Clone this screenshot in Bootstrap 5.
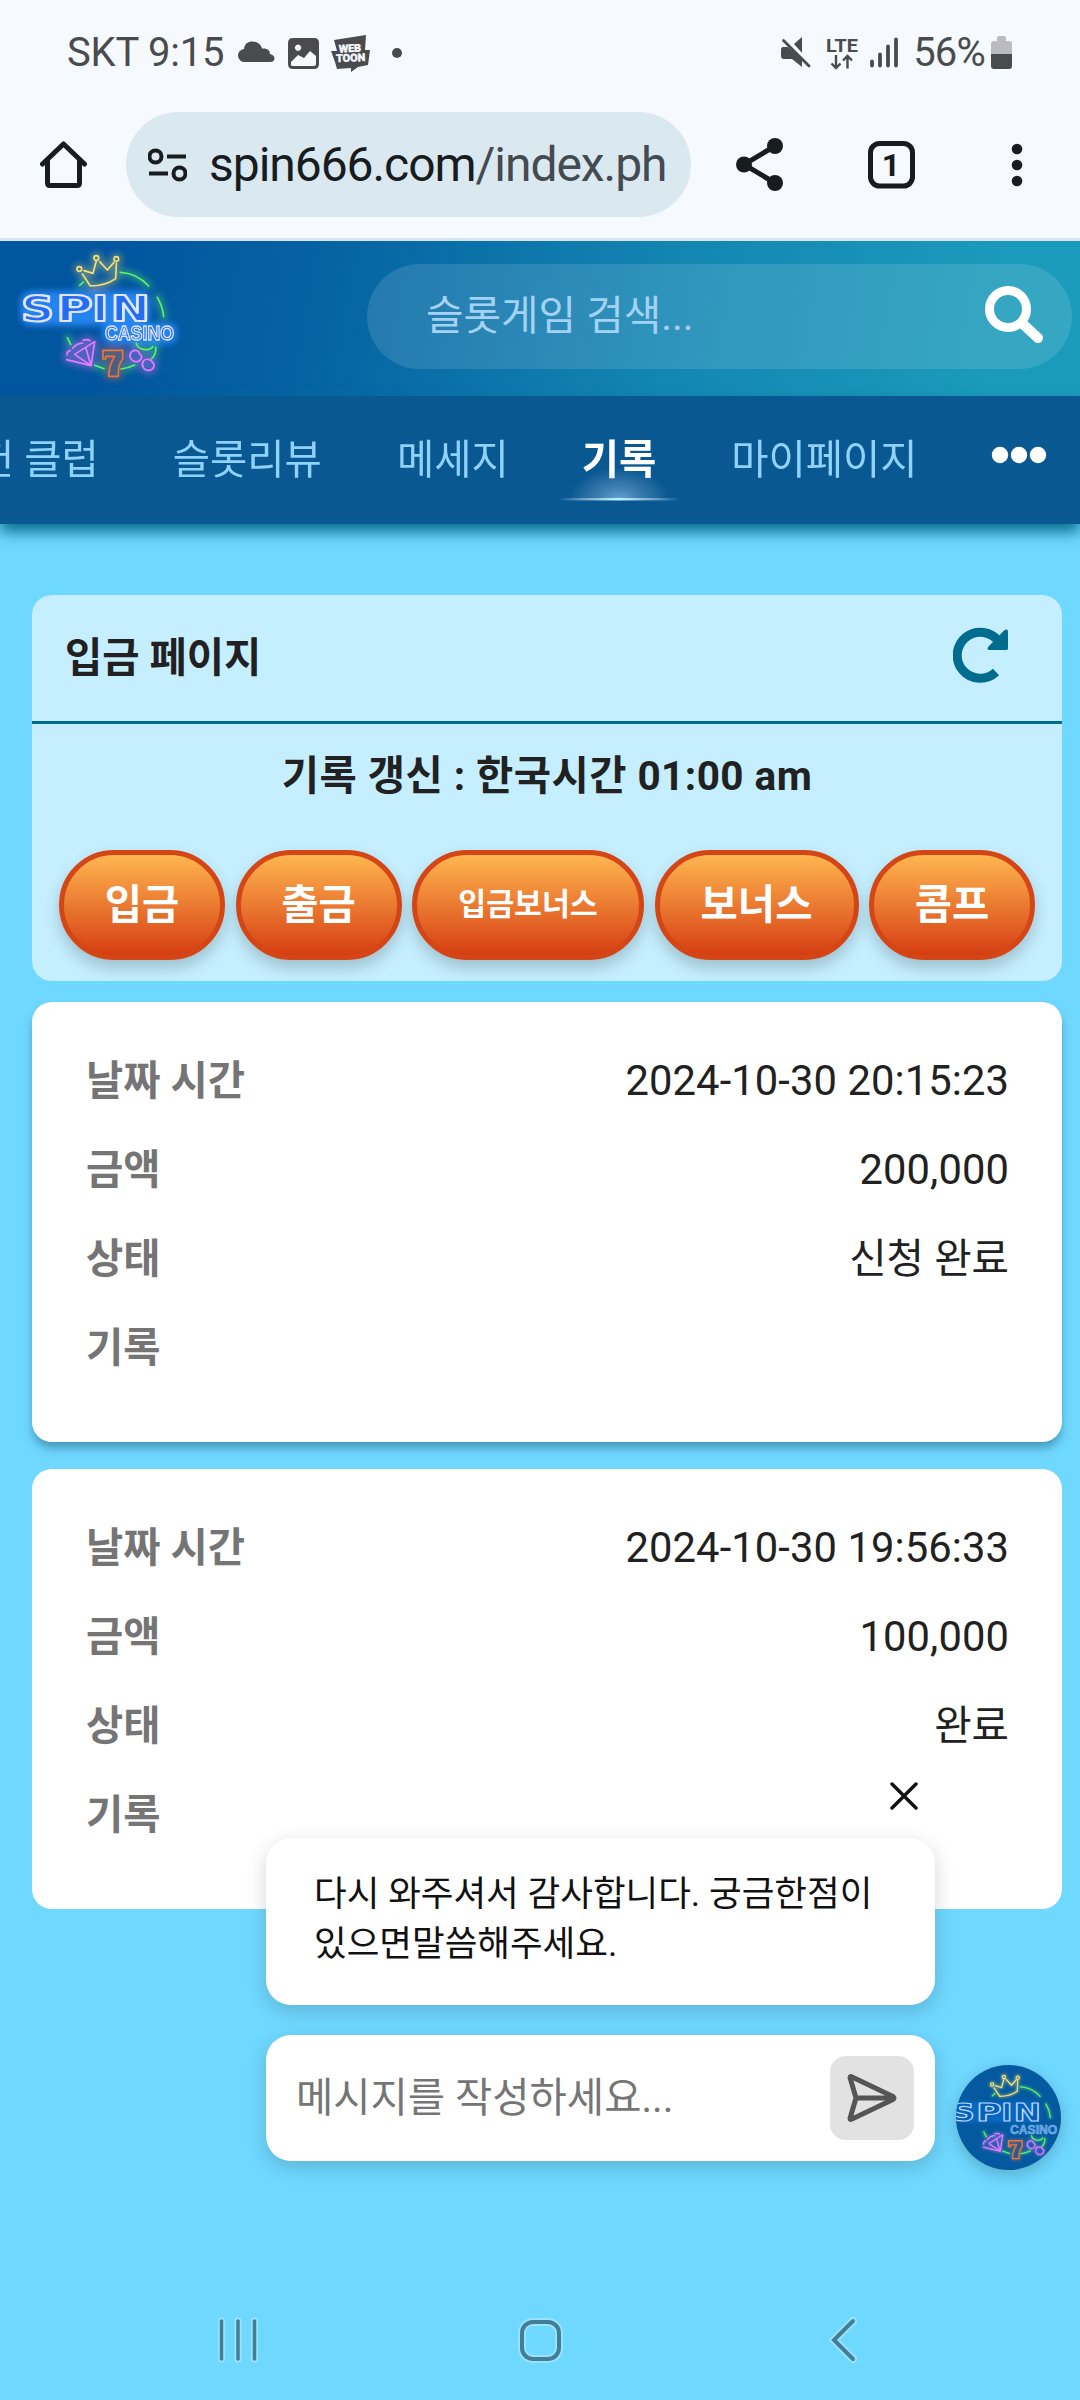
<!DOCTYPE html>
<html lang="ko">
<head>
<meta charset="utf-8">
<meta name="viewport" content="width=device-width, initial-scale=1">
<title>입금 페이지</title>
<link href="https://cdn.jsdelivr.net/npm/bootstrap@5.3.0/dist/css/bootstrap.min.css" rel="stylesheet">
<style>
body{width:1080px;height:2400px;overflow:hidden;background:#6fd8ff;color:#212121;font-family:Roboto,"Noto Sans CJK KR",sans-serif;font-size:40.5px;line-height:1.2}
svg{display:block;flex:none}
.screen{width:1080px;height:2400px}
.statusbar{height:106px;background:#f6f9fe;color:#4a4b4d;padding:0 67px;font-size:40px}
.browserbar{height:135px;background:#f6f9fe;padding:6px 0 21px 40px;border-bottom:3px solid #d8e5ee;color:#171c1f}
.urlpill{width:565px;height:105px;margin-left:39px;padding-left:22px;background:#dae8f0;font-size:48px;letter-spacing:-1.05px;white-space:nowrap}
.urlpill .path{color:#434b50}
.site-head{height:155px;background:linear-gradient(100deg,#02559f 10%,#0665a3 32%,#1386b3 62%,#1b9bbb 92%);padding:0 8px 0 17px}
.searchbox{width:705px;height:105px;background:rgba(255,255,255,.12);padding:0 29px 0 59px;color:#a3d2f5;margin-bottom:4px;font-size:40.8px}
.tabs{height:128px;background:#0a5892;box-shadow:0 8px 14px #0a6d8e;color:#8fd3fd;white-space:nowrap;z-index:1}
.tabs a{color:inherit;text-decoration:none;height:128px;display:flex;align-items:center}
.tabs a.current{color:#fff;font-weight:700;position:relative}
.glow{position:absolute;left:-24px;top:72px}
.main-col{padding:71px 18px 0 32px}
.panel{height:386px;border-radius:20px;background:#c5efff;overflow:hidden}
.panel-title{height:129px;border-bottom:3px solid #006d8f;padding:0 53px 0 33px;font-weight:700}
.panel-note{height:104px;font-weight:700;letter-spacing:.45px}
.pills{padding:22px 27px 0 27px}
.pill-btn{height:110px;border:5px solid #d44615;border-radius:55px;background:linear-gradient(#ffb650,#d63e12);color:#fff;font-weight:700;font-size:40.5px;padding:0;box-shadow:0 8px 16px rgba(0,0,0,.2)}
.w-a{width:166px}.w-b{width:232px;font-size:30.3px}.w-c{width:204px}
.record{height:440px;border-radius:20px;background:#fff;padding:35px 53px 0 54px;box-shadow:0 7px 10px -1px rgba(30,90,120,.5)}
.record dl div{height:89px}
.record dt{color:#757575;font-weight:700}
.record dd{margin:0;font-size:41.7px;letter-spacing:.1px}
.record dd.ko{font-size:40.7px;letter-spacing:0}
.chat{position:absolute;left:266px;top:1782px;width:795px}
.bubble{width:669px;height:167px;border-radius:25px;background:#fff;color:#111;font-size:35.5px;line-height:50px;padding:31px 40px 0 48px;box-shadow:0 6px 20px rgba(0,0,0,.17);white-space:nowrap}
.composer{width:669px;height:126px;border-radius:25px;background:#fff;color:#757575;padding:0 21px 0 30px;box-shadow:0 6px 20px rgba(0,0,0,.17)}
.send{width:84px;height:84px;border-radius:16px;background:#e2e2e2}
.avatar{width:105px;height:105px;border-radius:50%;overflow:hidden;background:#055a9f;box-shadow:0 5px 16px rgba(0,0,0,.2)}
.sysnav{height:120px;padding:0 223px 0 215px}
</style>
<script src="https://cdn.jsdelivr.net/npm/bootstrap@5.3.0/dist/js/bootstrap.bundle.min.js"></script>
</head>
<body>
<svg width="0" height="0" class="position-absolute">
<defs>
<filter id="halo" x="-30%" y="-40%" width="160%" height="180%"><feGaussianBlur stdDeviation="9"/></filter>
<filter id="soft" x="-30%" y="-30%" width="160%" height="160%"><feGaussianBlur stdDeviation="4"/></filter>
<g id="fruit" fill="none" stroke-linecap="round" stroke-linejoin="round">
<path stroke="#f5df74" d="M247 117L271 153Q316 153 347 131L349 85M252 107L279 115L289 78M299 80L322 105L342 82"/>
<g stroke="#f5df74"><circle cx="238" cy="102" r="7"/><circle cx="289" cy="69" r="7"/><circle cx="349" cy="72" r="7"/></g>
<path stroke="#5ef06b" d="M239 151L250 141M361 112Q410 114 446 153M472 187Q488 214 491 245M202 308L212 328M284 391L312 401M363 402Q386 399 404 390M467 337Q469 357 455 371M409 325Q413 342 436 344Q452 344 458 335"/>
<path stroke="#e97bff" d="M200 374L273 392L284 320L224 358L273 392L257 337M201 360Q201 348 211 347M218 340Q230 325 248 324M250 316Q262 311 270 317"/>
<path stroke="#e97bff" d="M393 352C402 343 417 345 418 356C434 365 420 382 406 380C392 378 386 362 393 352ZM430 378C438 369 455 373 456 381C467 387 462 405 447 406C432 408 422 392 430 378Z"/>
<path stroke="#f0733a" d="M309 346H368V372Q353 390 355 424H326Q326 392 344 364H317V372H309Z"/>
</g>
</defs>
</svg>

<div class="screen d-flex flex-column position-relative">
<header class="statusbar d-flex align-items-center">
<span style="letter-spacing:-.2px">SKT 9:15</span>
<svg style="margin-left:12px" width="170" height="44" viewBox="236 31 170 44" fill="#4a4b4d">
<path d="M245 62a6.500 6.500 0 0 1-1-13C245 38 260 40 262 48.500C268 48 270 51 270 54C276 55 276 62 270 62Z"/>
<path fill-rule="evenodd" d="M293 38H314Q319 38 319 43V64Q319 69 314 69H293Q288 69 288 64V43Q288 38 293 38ZM291 62V65Q291 66 293 66H314Q316 66 316 64V56L310 51L304 58L298 55ZM298 44.500a3.200 3.200 0 1 0 .1 0Z"/>
<path d="M334 40L366 35L365 50H370L368 65L358 67L351 72V68L337 69L335 62L331 51H337Z"/>
<g fill="#f6f9fe" stroke="#f6f9fe" stroke-width=".6" font-weight="700" font-size="10.500" transform="rotate(-2 350 53)"><text x="339" y="52" textLength="22" lengthAdjust="spacingAndGlyphs">WEB</text><text x="336" y="61.500" textLength="29" lengthAdjust="spacingAndGlyphs">TOON</text></g>
<circle cx="397" cy="53" r="5"/>
</svg>
<svg class="ms-auto" width="124" height="40" viewBox="778 33 124 40" fill="#4a4b4d">
<path d="M794 44L802 37V53ZM783 47H788L802 60V67L792 59H784Q781 59 781 56V50Q781 47 783 47Z"/>
<path d="M786 39L811 64" stroke="#f6f9fe" stroke-width="2.500"/>
<path d="M783.500 40.500L809 66" stroke="#4a4b4d" stroke-width="2.800" stroke-linecap="round"/>
<text x="826" y="51.500" font-size="19" font-weight="700" textLength="32" lengthAdjust="spacingAndGlyphs">LTE</text>
<path d="M836 55V68M831.500 63.500L836 68L840.500 63.500M847.500 68.500V56M843 60.500L847.500 56L852 60.500" fill="none" stroke="#4a4b4d" stroke-width="2.400"/>
<path d="M872 61.500V65.500M880 54.500V65.500M888 46.500V65.500M896 39.500V65.500" stroke="#4a4b4d" stroke-width="3.800" stroke-linecap="round"/>
</svg>
<span style="letter-spacing:-.8px;margin-left:11px;margin-right:6px">56%</span>
<svg class="me-n1" style="margin-right:1px" width="21" height="34" viewBox="0 0 21 34"><path fill="#b9bbc0" d="M6 2Q6 0 8 0H13Q15 0 15 2V5H18Q21 5 21 8V18H0V8Q0 5 3 5H6Z"/><path fill="#4a4b4d" d="M0 18H21V30Q21 33 18 33H3Q0 33 0 30Z"/></svg>
</header>

<div class="browserbar d-flex align-items-center">
<svg width="47" height="48" viewBox="40 141 47 48" fill="none" stroke="#171c1f" stroke-width="5" stroke-linejoin="round" stroke-linecap="round"><path d="M42.500 164L63.500 144L84.500 164M47.500 161V183Q47.500 185.500 50 185.500H77Q79.500 185.500 79.500 183V161"/></svg>
<div class="urlpill rounded-pill d-flex align-items-center">
<svg width="39" height="34" viewBox="148 147.500 39 34" fill="none" stroke="#171c1f" stroke-width="4"><circle cx="155.500" cy="156" r="6"/><path d="M167 156H186M149 173H168"/><circle cx="179.500" cy="173" r="6"/></svg>
<span style="margin-left:22px" class="addr">spin666.com<span class="path">/index.ph</span></span>
</div>
<svg style="margin-left:45px" width="47" height="53" viewBox="736 138 47 53" fill="#171c1f"><path d="M775 146L744 164.500L775 183" fill="none" stroke="#171c1f" stroke-width="5"/><circle cx="775" cy="146" r="8"/><circle cx="744" cy="164.500" r="8"/><circle cx="775" cy="183" r="8"/></svg>
<svg style="margin-left:85px" width="47" height="48" viewBox="868 141 47 48"><rect x="870.500" y="143.500" width="42" height="42.500" rx="9" fill="none" stroke="#171c1f" stroke-width="5"/><text x="891" y="175.500" text-anchor="middle" font-size="32" font-weight="700" fill="#171c1f">1</text></svg>
<svg style="margin-left:96px" width="12" height="44" viewBox="1011 142.500 12 44" fill="#171c1f"><circle cx="1017" cy="148.500" r="5.300"/><circle cx="1017" cy="164.500" r="5.300"/><circle cx="1017" cy="180.500" r="5.300"/></svg>
</div>

<div class="site-head d-flex align-items-center justify-content-between">
<svg width="180" height="155" viewBox="51 18 540 465">
<g filter="url(#halo)"><rect x="60" y="168" width="390" height="104" rx="35" fill="#2a8cff" opacity=".85"/><rect x="308" y="264" width="222" height="62" rx="22" fill="#2a8cff" opacity=".85"/><use href="#fruit" stroke-width="22" opacity=".35"/></g>
<use href="#fruit" stroke-width="5"/>
<g stroke="#dfe6ff" font-weight="700" stroke-linejoin="round"><g font-family="DejaVu Sans" font-size="107" fill="#246cf0" stroke-width="6.500"><text x="63" y="259" textLength="100" lengthAdjust="spacingAndGlyphs">S</text><text x="169" y="259" textLength="110" lengthAdjust="spacingAndGlyphs">P</text><text x="277" y="259" textLength="48" lengthAdjust="spacingAndGlyphs">I</text><text x="332" y="259" textLength="118" lengthAdjust="spacingAndGlyphs">N</text></g><text x="315" y="316" font-family="Liberation Sans" font-size="60" fill="#276bdd" stroke-width="4" textLength="207" lengthAdjust="spacingAndGlyphs">CASINO</text></g>
</svg>
<div class="searchbox rounded-pill d-flex align-items-center justify-content-between">
<span>슬롯게임 검색...</span>
<svg style="margin-bottom:6px" width="58" height="58" viewBox="985 284 58 58" fill="none" stroke="#fff"><circle cx="1008" cy="308" r="18.500" stroke-width="9"/><path d="M1024 324L1038 337" stroke-width="10" stroke-linecap="round"/></svg>
</div>
</div>

<nav class="tabs d-flex align-items-center">
<a href="#" style="margin-left:-23px">헌 클럽</a>
<a href="#" style="margin-left:74px">슬롯리뷰</a>
<a href="#" style="margin-left:75px">메세지</a>
<a href="#" class="current" style="margin-left:73px">기록
<svg class="glow" width="122" height="34" viewBox="0 0 122 34"><defs><radialGradient id="gl" gradientUnits="userSpaceOnUse" cx="0" cy="0" r="1" gradientTransform="translate(61 32) scale(50 32)"><stop offset="0" stop-color="#a8dcff" stop-opacity=".6"/><stop offset=".4" stop-color="#9dc3e8" stop-opacity=".36"/><stop offset="1" stop-color="#9dc3e8" stop-opacity="0"/></radialGradient><linearGradient id="ln"><stop offset="0" stop-color="#fff" stop-opacity="0"/><stop offset=".3" stop-color="#c8e6fa" stop-opacity=".6"/><stop offset=".5" stop-color="#b4f4ff"/><stop offset=".7" stop-color="#c8e6fa" stop-opacity=".6"/><stop offset="1" stop-color="#fff" stop-opacity="0"/></linearGradient></defs><rect width="122" height="32" fill="url(#gl)"/><rect y="30" width="122" height="2.500" fill="url(#ln)"/></svg></a>
<a href="#" style="margin-left:75px">마이페이지</a>
<svg style="margin-left:73px;margin-top:-10px" width="56" height="18" viewBox="0 0 56 18" fill="#fff"><circle cx="9" cy="9" r="8.200"/><circle cx="28" cy="9" r="8.200"/><circle cx="47" cy="9" r="8.200"/></svg>
</nav>

<main class="main-col flex-grow-1">
<section class="panel">
<div class="panel-title d-flex align-items-center justify-content-between"><span>입금 페이지</span>
<svg style="margin-bottom:6px" width="56" height="56" viewBox="0 0 56 56"><path d="M43 45A23 23 0 1 1 46 15" fill="none" stroke="#006d8f" stroke-width="9"/><path d="M51 3.500Q55 1 55 5V22Q55 23 53 23H36Q33 22 36 19Z" fill="#006d8f"/></svg>
</div>
<div class="panel-note d-flex align-items-center justify-content-center">기록 갱신 : 한국시간 01:00 am</div>
<div class="pills d-flex justify-content-between">
<button class="pill-btn w-a">입금</button><button class="pill-btn w-a">출금</button><button class="pill-btn w-b">입금보너스</button><button class="pill-btn w-c">보너스</button><button class="pill-btn w-a">콤프</button>
</div>
</section>
<section class="record" style="margin-top:21px"><dl class="m-0">
<div class="d-flex align-items-center justify-content-between"><dt>날짜 시간</dt><dd>2024-10-30 20:15:23</dd></div>
<div class="d-flex align-items-center justify-content-between"><dt>금액</dt><dd>200,000</dd></div>
<div class="d-flex align-items-center justify-content-between"><dt>상태</dt><dd class="ko">신청 완료</dd></div>
<div class="d-flex align-items-center justify-content-between"><dt>기록</dt><dd></dd></div>
</dl></section>
<section class="record shadow-none" style="margin-top:27px"><dl class="m-0">
<div class="d-flex align-items-center justify-content-between"><dt>날짜 시간</dt><dd>2024-10-30 19:56:33</dd></div>
<div class="d-flex align-items-center justify-content-between"><dt>금액</dt><dd>100,000</dd></div>
<div class="d-flex align-items-center justify-content-between"><dt>상태</dt><dd class="ko">완료</dd></div>
<div class="d-flex align-items-center justify-content-between"><dt>기록</dt><dd></dd></div>
</dl></section>
</main>

<aside class="chat">
<svg style="margin:0 0 28px 624px" width="28" height="28" viewBox="0 0 28 28"><path d="M2 2L26 26M26 2L2 26" stroke="#111" stroke-width="3.500" stroke-linecap="round"/></svg>
<div class="bubble">다시 와주셔서 감사합니다. 궁금한점이<br>있으면말씀해주세요.</div>
<div class="d-flex justify-content-between" style="margin-top:30px">
<div class="composer d-flex align-items-center justify-content-between"><span>메시지를 작성하세요...</span>
<div class="send d-flex align-items-center justify-content-center"><svg width="50" height="48" viewBox="0 0 50 48" fill="none" stroke="#555" stroke-width="5" stroke-linejoin="round" stroke-linecap="round"><path d="M3 3.500Q3 2 5 3L46 22.500Q48 24 46 25.500L5 45Q3 46 3 44.500L9 24ZM9 24H46"/></svg></div></div>
<div class="avatar" style="margin-top:30px"><svg width="105" height="105" viewBox="81 17 456 456">
<use href="#fruit" stroke-width="16" opacity=".35" filter="url(#soft)"/><rect x="60" y="175" width="385" height="92" rx="30" fill="#0878e8" opacity=".45" filter="url(#halo)"/>
<use href="#fruit" stroke-width="5.500"/>
<g stroke="#b9d8ff" font-weight="700" stroke-linejoin="round"><g font-family="DejaVu Sans" font-size="107" fill="#085fb8" stroke-width="5"><text x="63" y="259" textLength="100" lengthAdjust="spacingAndGlyphs">S</text><text x="169" y="259" textLength="110" lengthAdjust="spacingAndGlyphs">P</text><text x="277" y="259" textLength="48" lengthAdjust="spacingAndGlyphs">I</text><text x="332" y="259" textLength="118" lengthAdjust="spacingAndGlyphs">N</text></g><text x="315" y="316" font-family="Liberation Sans" font-size="56" fill="#4f96dc" stroke="#85bbf0" stroke-width="2.500" textLength="206" lengthAdjust="spacingAndGlyphs">CASINO</text></g></svg></div>
</div>
</aside>

<footer class="sysnav d-flex align-items-center justify-content-between">
<svg width="46" height="48" viewBox="0 0 46 48" fill="none" stroke-linecap="round"><g stroke="#9be3fd" stroke-width="7"><path d="M6.500 5V43M23 5V43M39.500 5V43"/></g><g stroke="#417f99" stroke-width="3.500"><path d="M6.500 5V43M23 5V43M39.500 5V43"/></g></svg>
<svg style="margin-right:11px" width="46" height="48" viewBox="0 0 46 48" fill="none"><rect x="5" y="6" width="37" height="37" rx="11" stroke="#9be3fd" stroke-width="8"/><rect x="5" y="6" width="37" height="37" rx="11" stroke="#417f99" stroke-width="4"/></svg>
<svg width="28" height="48" viewBox="0 0 28 48" fill="none" stroke-linecap="round"><path d="M24 5L5 24L24 43" stroke="#9be3fd" stroke-width="8"/><path d="M24 5L5 24L24 43" stroke="#417f99" stroke-width="4"/></svg>
</footer>
</div>
</body>
</html>
